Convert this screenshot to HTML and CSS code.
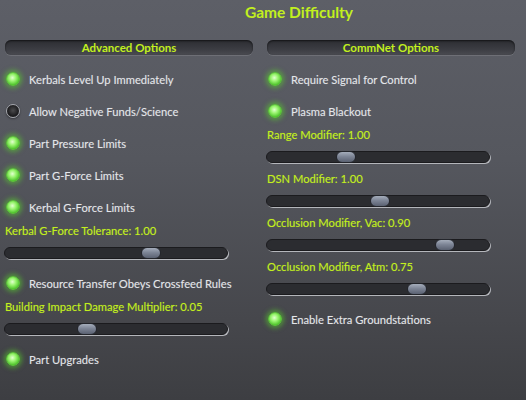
FILE: index.html
```html
<!DOCTYPE html>
<html lang="en">
<head>
    <meta charset="UTF-8">
    <meta name="viewport" content="width=device-width, initial-scale=1.0">
    <title>Game Difficulty</title>
    <link rel="stylesheet" href="styles.css">
</head>
<body>
    <div class="title">Game Difficulty</div>

    <div class="columns">
        <div class="column">
            <div class="section-head">Advanced Options</div>
            <div class="toggle-row"><span class="toggle on"></span>Kerbals Level Up Immediately</div>
            <div class="toggle-row"><span class="toggle"></span>Allow Negative Funds/Science</div>
            <div class="toggle-row"><span class="toggle on"></span>Part Pressure Limits</div>
            <div class="toggle-row"><span class="toggle on"></span>Part G-Force Limits</div>
            <div class="toggle-row"><span class="toggle on"></span>Kerbal G-Force Limits</div>
            <div class="slider-block">
                <div class="slider-label">Kerbal G-Force Tolerance: 1.00</div>
                <div class="track"><span class="thumb" style="left: 136px"></span></div>
            </div>
            <div class="toggle-row"><span class="toggle on"></span>Resource Transfer Obeys Crossfeed Rules</div>
            <div class="slider-block">
                <div class="slider-label">Building Impact Damage Multiplier: 0.05</div>
                <div class="track"><span class="thumb" style="left: 72px"></span></div>
            </div>
            <div class="toggle-row"><span class="toggle on"></span>Part Upgrades</div>
        </div>

        <div class="column">
            <div class="section-head">CommNet Options</div>
            <div class="toggle-row"><span class="toggle on"></span>Require Signal for Control</div>
            <div class="toggle-row"><span class="toggle on"></span>Plasma Blackout</div>
            <div class="slider-block">
                <div class="slider-label">Range Modifier: 1.00</div>
                <div class="track"><span class="thumb" style="left: 69px"></span></div>
            </div>
            <div class="slider-block">
                <div class="slider-label">DSN Modifier: 1.00</div>
                <div class="track"><span class="thumb" style="left: 103px"></span></div>
            </div>
            <div class="slider-block">
                <div class="slider-label">Occlusion Modifier, Vac: 0.90</div>
                <div class="track"><span class="thumb" style="left: 168px"></span></div>
            </div>
            <div class="slider-block">
                <div class="slider-label">Occlusion Modifier, Atm: 0.75</div>
                <div class="track"><span class="thumb" style="left: 140px"></span></div>
            </div>
            <div class="toggle-row"><span class="toggle on"></span>Enable Extra Groundstations</div>
        </div>
    </div>
</body>
</html>
```

FILE: styles.css
```css
html, body {
    height: 100%;
}
body {
    margin: 0;
    font-family: Lato, 'Open Sans', sans-serif;
    font-size: 11.2px;
    color: #e4e6ea;
    background: linear-gradient(#5d5f67, #55575e 40%, #46474c 80%, #3d3e42);
    overflow: hidden;
}
.title {
    height: 26px;
    line-height: 24px;
    padding-left: 72px;
    text-align: center;
    font-size: 15.5px;
    font-weight: 700;
    color: #c2f01e;
}
.columns {
    display: grid;
    grid-template-columns: 250px 250px;
    column-gap: 12px;
    padding-left: 4px;
    margin-top: 14px;
}
.section-head {
    height: 15px;
    line-height: 15px;
    margin: 0 1px 8px;
    border-radius: 6px;
    background: linear-gradient(#2c2d32, #3b3c42 60%, #4a4b51);
    box-shadow: inset 0 1px 2px rgba(0,0,0,0.6), 0 1px 0 rgba(255,255,255,0.12);
    text-align: center;
    font-size: 11.5px;
    font-weight: 700;
    color: #c2f01e;
}
.toggle-row {
    height: 32px;
    display: flex;
    align-items: center;
    gap: 9px;
    padding-left: 2px;
    text-shadow: 0 0 1px rgba(255,255,255,0.25);
}
.toggle {
    width: 14px;
    height: 14px;
    border-radius: 50%;
    flex: none;
    box-sizing: border-box;
    border: 1px solid #a4a6ac;
    background: radial-gradient(circle at 50% 45%, #4a4a4c 0, #1e1e20 60%, #0c0c0d 100%);
    box-shadow: 0 1px 2px rgba(0,0,0,0.4);
}
.toggle.on {
    border: 1px solid #5dc43a;
    background: radial-gradient(circle at 45% 40%, #e2ffd0 0, #9af470 35%, #55c932 70%, #36901e 100%);
    box-shadow: 0 0 5px 2px rgba(90, 220, 40, 0.55);
}
.slider-block {
    margin-bottom: 8px;
}
.slider-label {
    height: 16px;
    line-height: 16px;
    padding-left: 1px;
    color: #c2f01e;
    text-shadow: 0 0 1px rgba(194,240,30,0.4);
}
.track {
    position: relative;
    width: 224px;
    height: 12px;
    margin-top: 8px;
    box-sizing: border-box;
    border-radius: 6px;
    background: #2b2c30;
    border: 1px solid #1b1b1e;
    box-shadow: 1px 1px 0 #b4b6bb;
}
.thumb {
    position: absolute;
    top: -1px;
    width: 20px;
    height: 12px;
    box-sizing: border-box;
    border-radius: 6px;
    border: 1px solid #24262c;
    background: linear-gradient(#a5adbb, #7d8596 45%, #5a6171);
}
```
